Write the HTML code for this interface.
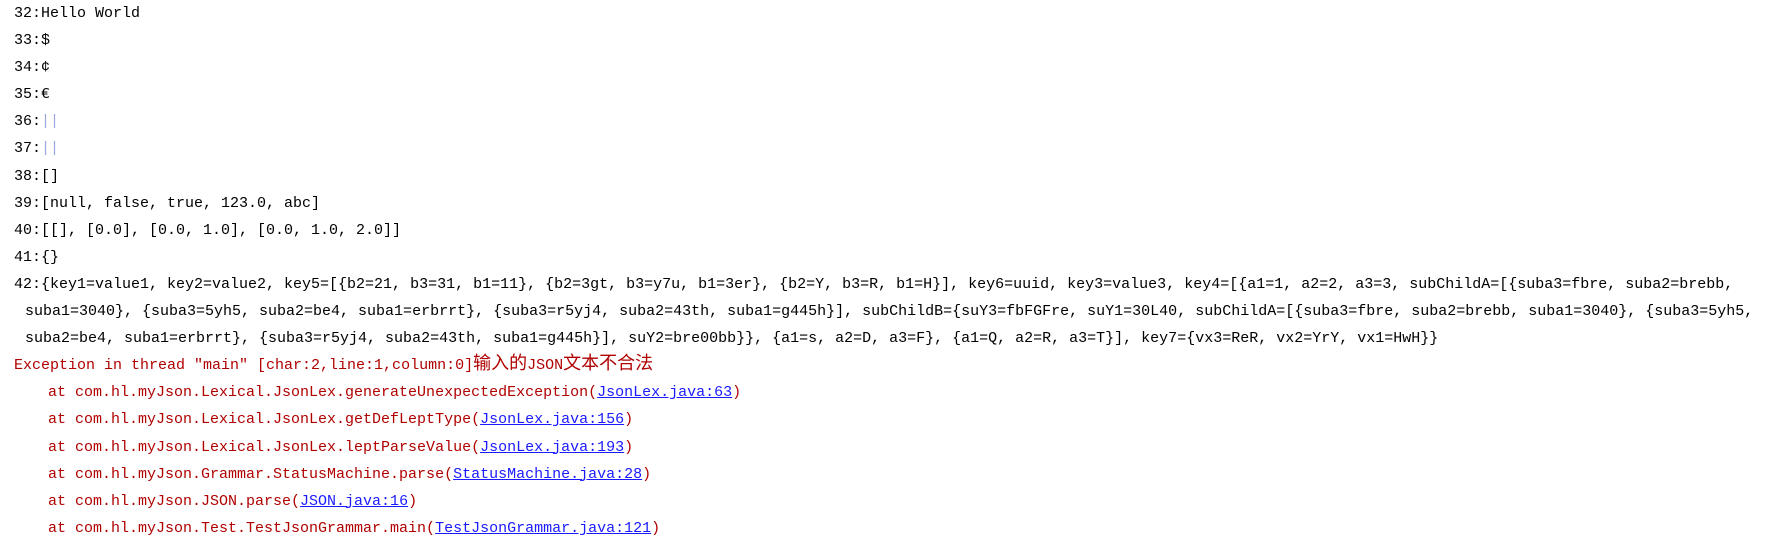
<!DOCTYPE html>
<html><head><meta charset="utf-8"><style>
html,body{margin:0;padding:0;background:#fff;width:1771px;height:542px;overflow:hidden}
.c{font-family:"Liberation Mono","Noto Sans CJK SC",monospace;font-size:15px;line-height:27.1px;color:#000;padding-left:14px;white-space:pre}
.w{padding-left:11px}
.r{color:#b00000}
.t{padding-left:34px}
a{color:#1a1aff;text-decoration:underline}
.b{color:#9aa6e0}
.cj{font-size:18px;line-height:10px}
</style></head><body><div class="c"><div>32:Hello World</div><div>33:$</div><div>34:¢</div><div>35:€</div><div>36:<span class="b">||</span></div><div>37:<span class="b">||</span></div><div>38:[]</div><div>39:[null, false, true, 123.0, abc]</div><div>40:[[], [0.0], [0.0, 1.0], [0.0, 1.0, 2.0]]</div><div>41:{}</div><div>42:{key1=value1, key2=value2, key5=[{b2=21, b3=31, b1=11}, {b2=3gt, b3=y7u, b1=3er}, {b2=Y, b3=R, b1=H}], key6=uuid, key3=value3, key4=[{a1=1, a2=2, a3=3, subChildA=[{suba3=fbre, suba2=brebb,</div><div class="w">suba1=3040}, {suba3=5yh5, suba2=be4, suba1=erbrrt}, {suba3=r5yj4, suba2=43th, suba1=g445h}], subChildB={suY3=fbFGFre, suY1=30L40, subChildA=[{suba3=fbre, suba2=brebb, suba1=3040}, {suba3=5yh5,</div><div class="w">suba2=be4, suba1=erbrrt}, {suba3=r5yj4, suba2=43th, suba1=g445h}], suY2=bre00bb}}, {a1=s, a2=D, a3=F}, {a1=Q, a2=R, a3=T}], key7={vx3=ReR, vx2=YrY, vx1=HwH}}</div><div class="r">Exception in thread "main" [char:2,line:1,column:0]<span class="cj">输入的</span>JSON<span class="cj">文本不合法</span></div><div class="r t">at com.hl.myJson.Lexical.JsonLex.generateUnexpectedException(<a>JsonLex.java:63</a>)</div><div class="r t">at com.hl.myJson.Lexical.JsonLex.getDefLeptType(<a>JsonLex.java:156</a>)</div><div class="r t">at com.hl.myJson.Lexical.JsonLex.leptParseValue(<a>JsonLex.java:193</a>)</div><div class="r t">at com.hl.myJson.Grammar.StatusMachine.parse(<a>StatusMachine.java:28</a>)</div><div class="r t">at com.hl.myJson.JSON.parse(<a>JSON.java:16</a>)</div><div class="r t">at com.hl.myJson.Test.TestJsonGrammar.main(<a>TestJsonGrammar.java:121</a>)</div></div></body></html>
